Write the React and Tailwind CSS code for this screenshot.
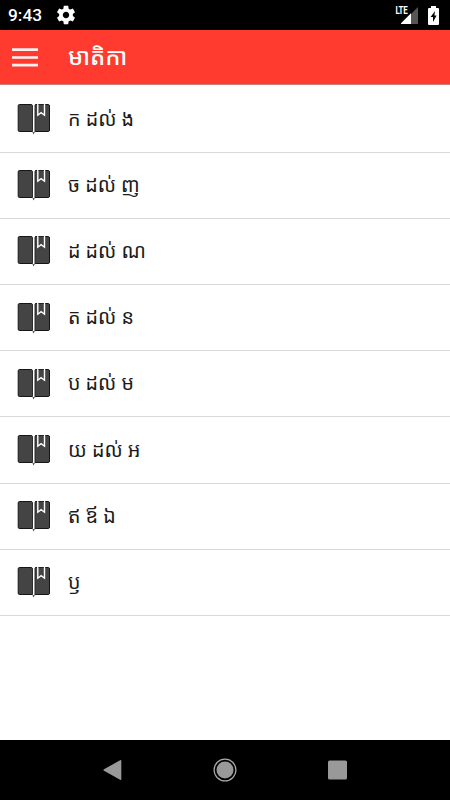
import React from 'react';

const chapters = [
  'ក ដល់ ង',
  'ច ដល់ ញ',
  'ដ ដល់ ណ',
  'ត ដល់ ន',
  'ប ដល់ ម',
  'យ ដល់ អ',
  'ឥ ឪ ឯ',
  'ឫ',
];

const GearIcon = () => (
  <svg className="w-[22px] h-[22px]" viewBox="0 0 24 24" fill="#fff">
    <path d="M19.43 12.98c.04-.32.07-.64.07-.98s-.03-.66-.07-.98l2.11-1.65c.19-.15.24-.42.12-.64l-2-3.46c-.12-.22-.39-.3-.61-.22l-2.49 1c-.52-.4-1.08-.73-1.69-.98l-.38-2.65C14.46 2.18 14.25 2 14 2h-4c-.25 0-.46.18-.49.42l-.38 2.65c-.61.25-1.17.59-1.69.98l-2.49-1c-.23-.09-.49 0-.61.22l-2 3.46c-.13.22-.07.49.12.64l2.11 1.65c-.04.32-.07.65-.07.98s.03.66.07.98l-2.11 1.65c-.19.15-.24.42-.12.64l2 3.46c.12.22.39.3.61.22l2.49-1c.52.4 1.08.73 1.69.98l.38 2.65c.03.24.24.42.49.42h4c.25 0 .46-.18.49-.42l.38-2.65c.61-.25 1.17-.59 1.69-.98l2.49 1c.23.09.49 0 .61-.22l2-3.46c.12-.22.07-.49-.12-.64l-2.11-1.65zM12 15.5c-1.93 0-3.5-1.57-3.5-3.5s1.57-3.5 3.5-3.5 3.5 1.57 3.5 3.5-1.57 3.5-3.5 3.5z" />
  </svg>
);

const SignalIcon = () => (
  <svg className="w-[17px] h-[17px]" viewBox="0 0 17 17">
    <path d="M17 0V17H0Z" fill="#555" />
    <path d="M10 6.2V17H0V16.2Z" fill="#fff" />
  </svg>
);

const BatteryIcon = () => (
  <svg className="w-[11px] h-[19px]" viewBox="0 0 11 19">
    <path d="M3 0H8V2H10A1 1 0 0 1 11 3V18A1 1 0 0 1 10 19H1A1 1 0 0 1 0 18V3A1 1 0 0 1 1 2H3Z" fill="#fff" />
    <path d="M7 5L2.6 11H5V16L8.6 9.6H6.4Z" fill="#000" />
  </svg>
);

const BookIcon = () => (
  <svg className="w-[34px] h-[32px] shrink-0" viewBox="0 0 34 32">
    <g fill="#444" stroke="#161616" strokeWidth="1">
      <path d="M2.3 1.5H14.2Q15.5 1.6 15.5 3V28.5H2.3Q1.2 28.5 1.2 27V3Q1.2 1.5 2.3 1.5Z" />
      <path d="M18.5 1.5H31.2Q32.5 1.5 32.5 3V27Q32.5 28.5 31.2 28.5H19Q18 28.6 17.8 29V3Q17.8 1.5 18.5 1.5Z" />
    </g>
    <path d="M15.3 28.4L16.6 31.5L17.9 28.4Z" fill="#333" />
    <path d="M16.65 1V29.2" stroke="#fff" strokeWidth="1.5" />
    <path d="M20.8 .5V12.2L24.1 9.7L27.5 12.2V.5" fill="#444" stroke="#fff" strokeWidth="1.4" />
    <path d="M20.1 .5H28.2" stroke="#fff" strokeWidth="1" />
    <path d="M21.6 1.5H26.7" stroke="#222" strokeWidth="1" />
  </svg>
);

const StatusBar = () => (
  <div className="flex h-[30px] items-center justify-between bg-black pl-2 pr-[11px] text-white">
    <div className="flex items-center gap-[13px]">
      <span className="pt-px text-[17.3px] font-medium leading-none font-[Roboto,sans-serif]">9:43</span>
      <GearIcon />
    </div>
    <div className="flex items-center gap-[10px]">
      <div className="relative flex pt-px">
        <span className="absolute right-[11px] top-0 text-[11px] leading-[10px] font-bold tracking-[-0.5px] scale-x-[0.72] origin-right font-[Roboto,sans-serif]">LTE</span>
        <SignalIcon />
      </div>
      <BatteryIcon />
    </div>
  </div>
);

const Header = ({ title }) => (
  <header className="flex h-[55px] items-center border-b border-[#c5817c] bg-[#ff3b30] pl-3">
    <button className="w-[26px]">
      <svg className="block w-[26px] h-[20px]" viewBox="0 0 26 20" stroke="#fff0ef" strokeWidth="2.7">
        <path d="M0 2.7H26M0 10.5H26M0 18.2H26" />
      </svg>
    </button>
    <h1 className="ml-[30px] -mt-[3px] text-[23.5px] leading-8 font-medium text-white">{title}</h1>
  </header>
);

const NavBar = () => (
  <nav className="flex h-[60px] items-center justify-around bg-black px-[56px]">
    <svg className="w-6 h-6" viewBox="0 0 24 24" fill="#999">
      <path d="M21.3 3V21Q21.3 22.3 20.1 21.7L4 12.8Q2.8 12 4 11.2L20.1 2.3Q21.3 1.7 21.3 3Z" />
    </svg>
    <svg className="w-6 h-6" viewBox="0 0 24 24">
      <circle cx="12" cy="12" r="10.9" fill="none" stroke="#aaa" strokeWidth="1.2" />
      <circle cx="12" cy="12" r="8.5" fill="#999" />
    </svg>
    <svg className="w-6 h-6" viewBox="0 0 24 24">
      <rect x="2" y="2.5" width="19" height="19" rx="1.5" fill="#999" />
    </svg>
  </nav>
);

const App = () => {
  return (
    <div className="flex h-[800px] w-[450px] flex-col overflow-hidden bg-white font-['Noto_Sans_Khmer','Noto_Sans',sans-serif]">
      <StatusBar />
      <Header title="មាតិកា" />
      <ul className="flex-1 pt-[1.5px]">
        {chapters.map((chapter) => (
          <li key={chapter} className="flex h-[66.2px] items-center gap-[17px] border-b border-[#d9d9d9] pl-[17px]">
            <BookIcon />
            <span className="-mt-px text-[19.7px] leading-8 text-[#1c1c1c]">{chapter}</span>
          </li>
        ))}
      </ul>
      <NavBar />
    </div>
  );
};

export default App;
